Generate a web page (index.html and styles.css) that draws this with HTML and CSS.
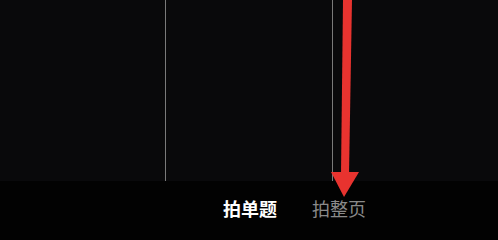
FILE: index.html
```html
<!DOCTYPE html>
<html lang="zh">
<head>
<meta charset="utf-8">
<link rel="stylesheet" href="styles.css">
</head>
<body>
<div class="screen">
  <div class="viewfinder">
    <div class="cell"></div>
    <div class="cell"></div>
    <div class="cell last"></div>
  </div>
  <div class="tabbar">
    <span class="tab active">拍单题</span>
    <span class="tab">拍整页</span>
  </div>
  <svg class="arrow" width="498" height="234" viewBox="0 0 498 234">
    <polygon points="343,0 352,0 349,174 341,174" fill="#e8332f"/>
    <polygon points="331,172 359,172 344,197" fill="#e8332f"/>
  </svg>
</div>
</body>
</html>
```
FILE: styles.css
```css
html, body {
  margin: 0;
  padding: 0;
  background: #020202;
}
.screen {
  position: relative;
  width: 498px;
  height: 234px;
  overflow: hidden;
  font-family: "Noto Sans CJK SC", "Noto Sans", sans-serif;
}
.viewfinder {
  height: 181px;
  background: #09090b;
  display: grid;
  grid-template-columns: 166px 167px 1fr;
}
.cell {
  border-right: 1px solid #7a7a7a;
}
.cell.last {
  border-right: none;
}
.tabbar {
  height: 53px;
  display: flex;
  align-items: center;
  gap: 35px;
  padding-left: 223px;
  box-sizing: border-box;
}
.tab {
  font-size: 18px;
  line-height: 1;
  color: #8a8a8a;
  margin-top: 0;
}
.tab.active {
  color: #ffffff;
  font-weight: 700;
}
.arrow {
  position: absolute;
  left: 0;
  top: 0;
}
```
